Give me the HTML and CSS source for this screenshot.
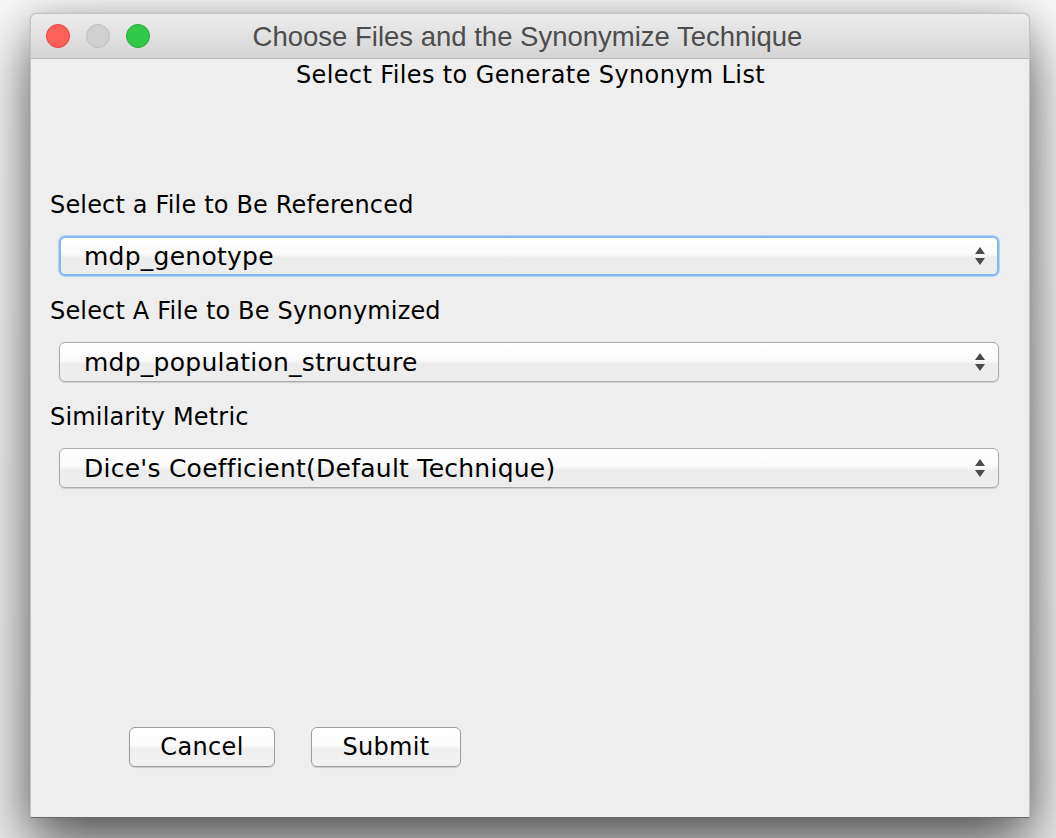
FILE: index.html
```html
<!DOCTYPE html>
<html>
<head>
<meta charset="utf-8">
<link rel="stylesheet" href="styles.css">
</head>
<body>
<div class="window">
  <div class="titlebar">
    <div class="lights">
      <span class="light red"></span>
      <span class="light gray"></span>
      <span class="light green"></span>
    </div>
    <div class="title">Choose Files and the Synonymize Technique</div>
  </div>
  <div class="content">
    <div class="subtitle">Select Files to Generate Synonym List</div>
    <div class="label first">Select a File to Be Referenced</div>
    <div class="combo focused">
      <span class="combo-text">mdp_genotype</span>
      <svg class="arrows" width="12" height="20" viewBox="0 0 12 20"><path d="M6 1 L11 8 L1 8 Z M1 12 L11 12 L6 19 Z" fill="#4a4a4a"/></svg>
    </div>
    <div class="label">Select A File to Be Synonymized</div>
    <div class="combo">
      <span class="combo-text">mdp_population_structure</span>
      <svg class="arrows" width="12" height="20" viewBox="0 0 12 20"><path d="M6 1 L11 8 L1 8 Z M1 12 L11 12 L6 19 Z" fill="#4a4a4a"/></svg>
    </div>
    <div class="label">Similarity Metric</div>
    <div class="combo">
      <span class="combo-text">Dice's Coefficient(Default Technique)</span>
      <svg class="arrows" width="12" height="20" viewBox="0 0 12 20"><path d="M6 1 L11 8 L1 8 Z M1 12 L11 12 L6 19 Z" fill="#4a4a4a"/></svg>
    </div>
    <div class="buttons">
      <button class="btn cancel">Cancel</button>
      <button class="btn submit">Submit</button>
    </div>
  </div>
</div>
</body>
</html>
```
FILE: styles.css
```css
html, body {
  margin: 0;
  padding: 0;
}
body {
  width: 1056px;
  height: 838px;
  overflow: hidden;
  background: linear-gradient(#f8f8f8, #eeeeee);
  padding: 13px 0 0 30px;
  box-sizing: border-box;
  font-family: "DejaVu Sans", "Liberation Sans", sans-serif;
}
.window {
  width: 1000px;
  height: 805px;
  box-sizing: border-box;
  border: 1px solid #c4c4c4;
  border-bottom-color: #6a6a6a;
  border-radius: 7px 7px 2px 2px;
  background: #eeeeee;
  box-shadow: 0 28px 60px rgba(0, 0, 0, 0.62), 0 0 30px rgba(0, 0, 0, 0.12), 0 0 1px rgba(0,0,0,0.3);
  display: flex;
  flex-direction: column;
  overflow: hidden;
}
.titlebar {
  height: 44px;
  flex: none;
  background: linear-gradient(#ececec, #d5d5d5);
  border-bottom: 1px solid #b8b8b8;
  display: flex;
  align-items: center;
}
.lights {
  display: flex;
  gap: 16px;
  padding-left: 15px;
}
.light {
  width: 22px;
  height: 22px;
  border-radius: 50%;
  border: 1px solid;
  display: block;
}
.red { background: #fc605b; border-color: #e0443e; }
.gray { background: #d0d0d0; border-color: #bdbdbd; }
.green { background: #34c84a; border-color: #22ab35; }
.title {
  flex: 1;
  text-align: center;
  font-family: "Liberation Sans", Arial, sans-serif;
  font-size: 27.5px;
  color: #4d4d4d;
  margin-left: -120px;
  padding-right: 4px;
  padding-top: 1px;
}
.content {
  flex: 1;
  display: flex;
  flex-direction: column;
  padding: 2px 30px 50px 19px;
}
.subtitle {
  text-align: center;
  font-size: 24px;
  letter-spacing: 0.38px;
  line-height: 28px;
  color: #000;
  padding-left: 12px;
}
.label {
  font-size: 24px;
  letter-spacing: 0.17px;
  line-height: 26px;
  color: #000;
  margin-top: 22px;
}
.label.first {
  margin-top: 103px;
}
.combo {
  margin-top: 18px;
  margin-left: 9px;
  height: 40px;
  box-sizing: border-box;
  border: 1px solid #a9a9a9;
  border-radius: 6px;
  background: linear-gradient(#ffffff 0%, #fafafa 45%, #ececec 55%, #ededed 100%);
  box-shadow: 0 1px 1px rgba(0,0,0,0.12);
  display: flex;
  align-items: center;
  padding: 0 12px 0 24px;
}
.combo.focused {
  border: 2px solid #84b8ee;
  box-shadow: 0 0 0 1px #b4d4f6;
  padding-left: 23px;
  padding-right: 11px;
}
.combo-text {
  flex: 1;
  font-size: 25px;
  letter-spacing: 0.25px;
  color: #000;
}
.arrows {
  display: block;
}
.buttons {
  margin-top: auto;
  margin-left: 79px;
  display: flex;
  gap: 36px;
}
.btn {
  height: 40px;
  box-sizing: border-box;
  border: 1px solid #9c9c9c;
  border-radius: 6px;
  background: linear-gradient(#ffffff 0%, #fbfbfb 45%, #efefef 55%, #f1f1f1 100%);
  box-shadow: 0 1px 1px rgba(0,0,0,0.15);
  font-family: "DejaVu Sans", "Liberation Sans", sans-serif;
  font-size: 24px;
  letter-spacing: 0.35px;
  color: #000;
  padding: 0;
}
.cancel { width: 146px; }
.submit { width: 150px; }
```
